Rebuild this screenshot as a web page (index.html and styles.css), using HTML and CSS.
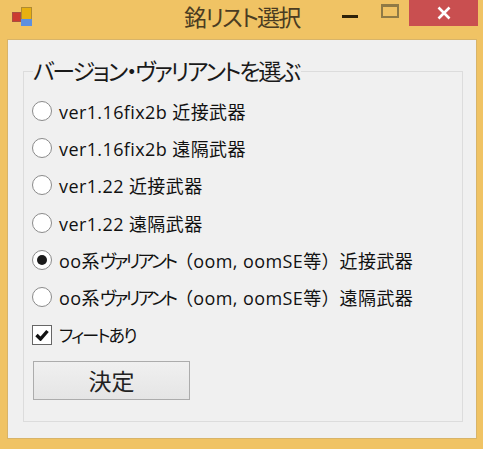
FILE: index.html
```html
<!DOCTYPE html>
<html lang="ja">

<head>
    <meta charset="UTF-8">
    <title>銘リスト選択</title>
    <link rel="stylesheet" href="styles.css">
</head>

<body>
    <div class="window">
        <div class="titlebar">
            <svg class="app-icon" width="22" height="20" viewBox="0 0 22 20">
                <rect x="9.5" y="0.5" width="10" height="12" fill="#e8b010" stroke="#b08a30"/>
                <rect x="9" y="12" width="11" height="7" fill="#5c8fe0"/>
                <rect x="0.5" y="5.5" width="8" height="9" fill="#cc3a30" stroke="#a85040"/>
            </svg>
            <div class="title">銘リスト選択</div>
            <div class="caption-buttons">
                <div class="btn-min"><span></span></div>
                <div class="btn-max"><span></span></div>
                <div class="btn-close">
                    <svg width="14" height="14" viewBox="0 0 14 14">
                        <path d="M1.5 1.5 L12.5 12.5 M12.5 1.5 L1.5 12.5" stroke="#fff" stroke-width="2.6"/>
                    </svg>
                </div>
            </div>
        </div>
        <div class="client">
            <div class="group">
                <div class="legend">バージョン・ヴァリアントを選ぶ</div>
                <div class="options">
                    <div class="option"><span class="radio"></span>ver1.16fix2b 近接武器</div>
                    <div class="option"><span class="radio"></span>ver1.16fix2b 遠隔武器</div>
                    <div class="option"><span class="radio"></span>ver1.22 近接武器</div>
                    <div class="option"><span class="radio"></span>ver1.22 遠隔武器</div>
                    <div class="option"><span class="radio checked"></span>oo系<span class="kana">ヴァリアント</span><span class="paren">（</span>oom, oomSE等<span class="paren">）</span>近接武器</div>
                    <div class="option"><span class="radio"></span>oo系<span class="kana">ヴァリアント</span><span class="paren">（</span>oom, oomSE等<span class="paren">）</span>遠隔武器</div>
                </div>
                <div class="check-row">
                    <span class="checkbox">
                        <svg width="14" height="12" viewBox="0 0 14 12">
                            <path d="M1.5 6 L5.5 10 L12.5 2" fill="none" stroke="#111" stroke-width="3.4"/>
                        </svg>
                    </span>
                    フィートあり
                </div>
                <div class="submit">決定</div>
            </div>
        </div>
    </div>
</body>

</html>
```

FILE: styles.css
```css
* {
    margin: 0;
    padding: 0;
    box-sizing: border-box;
}

html,
body {
    width: 483px;
    height: 449px;
    overflow: hidden;
}

body {
    background-color: #f0c364;
    font-family: "Open Sans", "Noto Sans CJK JP", sans-serif;
    font-feature-settings: "palt";
    color: #111;
}

.window {
    display: flex;
    flex-direction: column;
    height: 449px;
    padding: 0 6px 10px 7px;
}

.titlebar {
    display: flex;
    align-items: flex-start;
    height: 39px;
    position: relative;
}

.app-icon {
    margin: 7px 0 0 5px;
}

.title {
    position: absolute;
    left: 177px;
    top: 0;
    font-size: 23px;
    line-height: 34px;
    letter-spacing: -1.8px;
    color: #4a3c22;
}

.caption-buttons {
    display: flex;
    margin-left: auto;
    margin-right: -1px;
}

.btn-min {
    width: 16px;
    margin-right: 23px;
    padding-top: 15px;
}

.btn-min span {
    display: block;
    width: 16px;
    height: 3px;
    background-color: #2e2208;
}

.btn-max {
    width: 18px;
    margin-right: 10px;
    padding-top: 4px;
}

.btn-max span {
    display: block;
    width: 18px;
    height: 14px;
    border: 2px solid #8f7a45;
    border-top-width: 3px;
}

.btn-close {
    display: flex;
    align-items: center;
    justify-content: center;
    width: 69px;
    height: 26px;
    background-color: #c94f50;
}

.client {
    flex: 1;
    background-color: #f0f0f0;
    border: 1px solid #d8b469;
    padding: 31px 13px 15px 15px;
}

.group {
    height: 351px;
    border: 1px solid #dcdcdc;
    padding: 0 0 0 8px;
}

.legend {
    width: 268px;
    margin: -16px 0 0 1px;
    height: 30px;
    font-size: 23px;
    line-height: 30px;
    letter-spacing: -2.2px;
    background-color: #f0f0f0;
    white-space: nowrap;
    color: #1a1a1a;
}

.options {
    margin-top: 6px;
}

.option {
    display: flex;
    align-items: center;
    height: 37.3px;
    font-size: 18px;
    letter-spacing: 0.4px;
    white-space: pre;
}

.kana {
    letter-spacing: -2.7px;
}

.paren {
    font-feature-settings: "palt" 0;
    letter-spacing: 0;
}

.radio {
    width: 20px;
    height: 20px;
    margin-right: 7px;
    border-radius: 50%;
    border: 1px solid #8a8a8a;
    background-color: #fff;
    display: flex;
    align-items: center;
    justify-content: center;
}

.radio.checked::after {
    content: "";
    width: 10px;
    height: 10px;
    border-radius: 50%;
    background-color: #1a1a1a;
}

.check-row {
    display: flex;
    align-items: center;
    margin-top: 4px;
    height: 30px;
    font-size: 17px;
    letter-spacing: -1.8px;
}

.checkbox {
    display: flex;
    align-items: center;
    justify-content: center;
    width: 20px;
    height: 20px;
    margin-right: 7px;
    border: 1px solid #666;
    background-color: #fff;
}

.submit {
    display: flex;
    align-items: center;
    justify-content: center;
    width: 157px;
    height: 39px;
    margin: 11px 0 0 1px;
    font-size: 23px;
    border: 1px solid #acacac;
    background: linear-gradient(#f0f0f0, #e5e5e5);
    color: #222;
}
```
